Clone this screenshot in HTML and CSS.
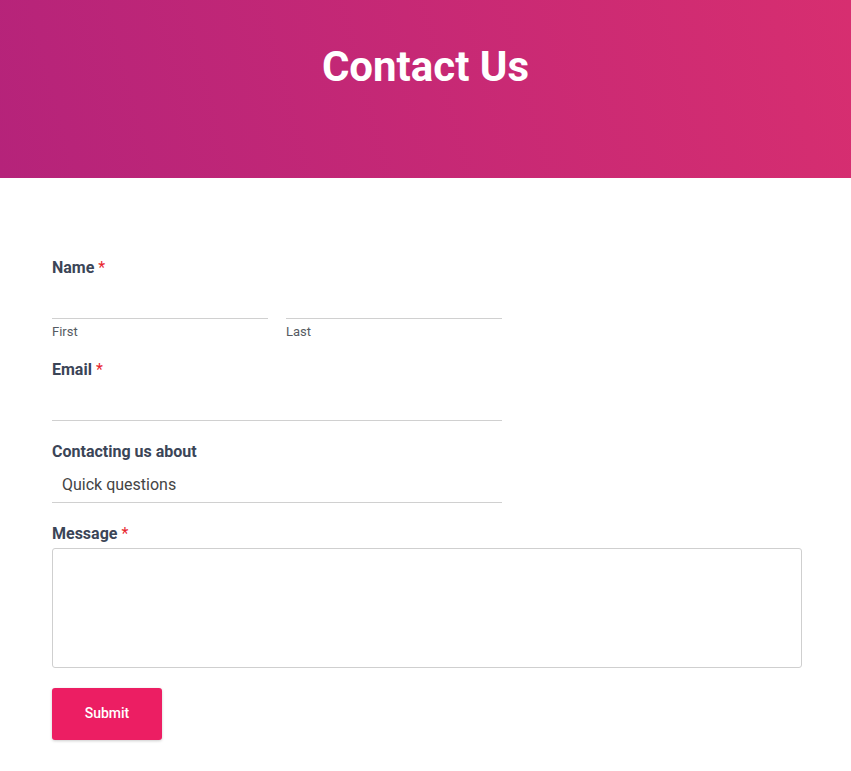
FILE: index.html
```html
<!DOCTYPE html>
<html lang="en">
<head>
    <meta charset="UTF-8">
    <meta name="viewport" content="width=device-width, initial-scale=1.0">
    <title>Contact Us</title>
    <link rel="stylesheet" href="styles.css">
</head>
<body>
    <header class="hero">
        <h1>Contact Us</h1>
    </header>

    <form class="contact-form">
        <div class="field">
            <label class="label">Name <span class="req">*</span></label>
            <div class="name-row">
                <div class="name-part">
                    <input type="text" class="line-input" id="firstName">
                    <span class="sublabel">First</span>
                </div>
                <div class="name-part">
                    <input type="text" class="line-input" id="lastName">
                    <span class="sublabel">Last</span>
                </div>
            </div>
        </div>

        <div class="field field-loose">
            <label class="label" for="email">Email <span class="req">*</span></label>
            <input type="email" class="line-input wide" id="email">
        </div>

        <div class="field field-loose">
            <label class="label" for="topic">Contacting us about</label>
            <select class="line-select wide" id="topic">
                <option>Quick questions</option>
                <option>Support</option>
                <option>Other</option>
            </select>
        </div>

        <div class="field">
            <label class="label" for="message">Message <span class="req">*</span></label>
            <textarea id="message" class="message"></textarea>
        </div>

        <button type="submit" class="submit">Submit</button>
    </form>
</body>
</html>
```

FILE: styles.css
```css
body {
    font-family: Roboto, "Liberation Sans", Arial, sans-serif;
    margin: 0;
    background: #fff;
}
.hero {
    height: 178px;
    box-sizing: border-box;
    padding-top: 42px;
    background: linear-gradient(75deg, #b5237a, #d72e70);
    text-align: center;
}
.hero h1 {
    margin: 0;
    font-size: 42px;
    line-height: 1.2;
    font-weight: 700;
    color: #fff;
}
.contact-form {
    width: 750px;
    margin-left: 52px;
    padding: 80px 0 40px;
}
.field {
    margin-bottom: 20px;
}
.field-loose {
    margin-bottom: 21px;
}
.label {
    display: block;
    font-size: 16px;
    line-height: 20px;
    font-weight: 700;
    color: #3b4557;
}
.req {
    color: #e8262f;
    font-weight: 400;
}
.name-row {
    display: flex;
    gap: 18px;
    width: 450px;
}
.name-part {
    flex: 1;
}
.line-input, .line-select {
    display: block;
    width: 100%;
    height: 41px;
    box-sizing: border-box;
    border: none;
    border-bottom: 1px solid #d0d0d0;
    font-family: inherit;
    font-size: 16px;
    color: #444;
    outline: none;
    background: transparent;
}
.wide {
    width: 450px;
}
.line-select {
    appearance: none;
    -webkit-appearance: none;
    padding: 13px 10px 7px;
    line-height: 20px;
}
.sublabel {
    display: block;
    margin-top: 5px;
    font-size: 13px;
    line-height: 16px;
    color: #555a62;
}
.message {
    display: block;
    width: 750px;
    height: 120px;
    box-sizing: border-box;
    margin-top: 4px;
    border: 1px solid #cfcfcf;
    border-radius: 3px;
    resize: none;
    font-family: inherit;
}
.submit {
    width: 110px;
    height: 52px;
    padding-bottom: 4px;
    border: none;
    border-radius: 3px;
    background: #ec1e63;
    color: #fff;
    font-family: inherit;
    font-size: 14px;
    font-weight: 500;
    box-shadow: 0 1px 3px rgba(0, 0, 0, 0.2);
}
```
